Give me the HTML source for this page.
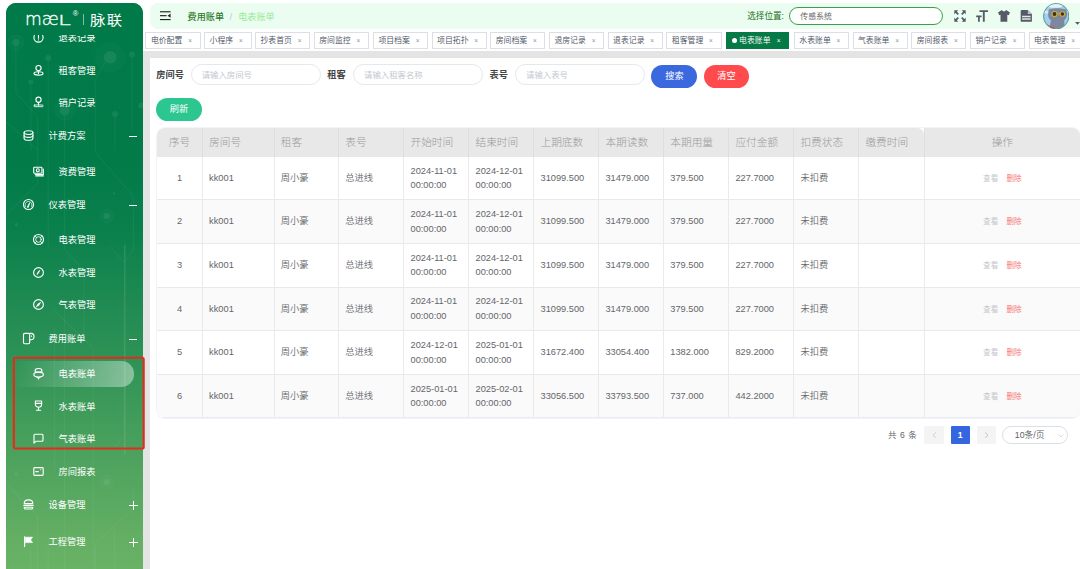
<!DOCTYPE html>
<html lang="zh-CN"><head><meta charset="utf-8"><title>电表账单</title>
<style>
*{box-sizing:border-box;}
html,body{margin:0;padding:0;}
body{width:1080px;height:569px;overflow:hidden;background:#fff;position:relative;
 font-family:"Liberation Sans","Noto Sans CJK SC",sans-serif;color:#606266;}
.abs{position:absolute;}
#side{position:absolute;left:6.3px;top:3px;width:136.9px;height:570px;border-radius:10px 10px 0 0;overflow:hidden;
 background:linear-gradient(180deg,#007a48 0%,#027b49 28%,#0a804c 40%,#1e8a52 52%,#2f9356 63%,#439d5b 74%,#55a760 85%,#62ae63 93%,#6ab366 100%);}
#side svg.bgp{position:absolute;left:0;top:0;}
#logo{position:absolute;left:0;top:0;width:100%;height:32px;background:#007a48;z-index:5;color:#fff;}
.mi{position:absolute;left:0;width:100%;height:20px;color:#fff;font-size:9.25px;line-height:20px;white-space:nowrap;}
.mi .tx{position:absolute;top:0.8px;}
.mi svg{position:absolute;overflow:visible;}
.mi.top .tx{left:42.2px;}
.mi.sub .tx{left:52.1px;}
.pm{position:absolute;left:122.6px;width:9px;height:9px;}
.pm i{position:absolute;background:#fff;display:block;}
#pill{position:absolute;left:7px;top:358.4px;width:120.3px;height:25.2px;border-radius:0 12.6px 12.6px 0;
 background:linear-gradient(90deg,rgba(255,255,255,0) 0%,rgba(255,255,255,.12) 30%,rgba(255,255,255,.42) 100%);}
#redbox{position:absolute;left:11px;top:355px;z-index:9;}
#gray1{position:absolute;left:143.2px;top:51.1px;width:940px;height:6.6px;background:#e4e4e4;}
#gray2{position:absolute;left:143.2px;top:51.1px;width:6.4px;height:520px;background:#e4e4e4;}
#card{position:absolute;left:149.6px;top:57.6px;width:940px;height:520px;background:#fff;border-radius:5px 0 0 0;}
#nav{position:absolute;left:149.6px;top:2.9px;width:940px;height:26.3px;background:#ebfdf0;border-radius:8px 0 0 8px;}
.tab{position:absolute;top:32.3px;height:16.3px;border:0.6px solid #dcdfe7;background:#fff;color:#495060;font-weight:350;font-size:7.875px;line-height:15.1px;white-space:nowrap;padding-left:4.5px;}
.tab .x{position:absolute;right:7.7px;top:0.2px;font-size:6.6px;color:#8f949d;line-height:15.1px;}
.tab.act{background:#067a46;border-color:#067a46;color:#fff;}
.tab.act .x{color:#fff;}
.tab.act .dot{display:inline-block;width:5px;height:5px;border-radius:50%;background:#fff;margin-right:2.6px;position:relative;top:-0.5px;}
.lbl{position:absolute;top:64.5px;height:20.5px;line-height:20.5px;font-size:9.2px;font-weight:bold;color:#444;white-space:nowrap;}
.inp{position:absolute;top:64px;height:21.4px;width:130.2px;border:1px solid #e4e7ed;border-radius:10.7px;background:#fff;
 font-size:8.4px;line-height:20.2px;color:#c4c8d0;padding-left:10px;white-space:nowrap;margin-left:-0.5px;}
.btn{position:absolute;height:23.3px;border-radius:11.7px;color:#fff;font-size:9.2px;line-height:23.3px;text-align:center;white-space:nowrap;}
#tbl{position:absolute;left:157px;top:127.6px;width:923px;height:290.3px;border-radius:8px;overflow:hidden;background:#fff;
 box-shadow:0 0 0 0.7px #edf0f6;}
.th{position:absolute;top:0;height:29.2px;background:#e8e8e8;color:#9a9a9a;font-size:10.7px;font-weight:300;line-height:29.6px;white-space:nowrap;padding-left:6.1px;border-left:0.6px solid #dedede;}
.td{position:absolute;height:43.6px;font-weight:350;font-size:9.25px;color:#64666a;white-space:nowrap;padding-left:6.1px;border-left:0.6px solid #eaeaea;border-bottom:0.6px solid #e9e9e9;line-height:14.6px;}
.td.one{line-height:42.8px;}
.td.two{padding-top:6.9px;}
.td.c{text-align:center;padding-left:0;}
.odd{background:#fff;}
.even{background:#fafafa;}
.op a{font-size:7.6px;}
</style></head>
<body>
<div id="nav"><svg class="abs" style="left:10.9px;top:8.4px" width="10.8" height="9.4" viewBox="0 0 10.8 9.4"><g fill="#222"><rect x="0" y="0.2" width="10.6" height="1.15"/><rect x="0" y="4.1" width="6.6" height="1.15"/><rect x="0" y="8" width="10.6" height="1.15"/><path d="M10.6 2.6 L10.6 6.8 L7.6 4.7Z"/></g></svg><span class="abs" style="left:38px;top:6.9px;font-size:9.1px;line-height:14px;color:#2f7a2c;white-space:nowrap;font-weight:500;">费用账单</span><span class="abs" style="left:80.2px;top:6.9px;font-size:8.5px;line-height:14px;color:#c0c4cc;">/</span><span class="abs" style="left:88.6px;top:6.9px;font-size:9.1px;line-height:14px;color:#98ea98;white-space:nowrap;">电表账单</span><span class="abs" style="left:597.6px;top:6.2px;font-size:8.6px;line-height:14px;color:#1c701c;white-space:nowrap;">选择位置:</span><div class="abs" style="left:639.3px;top:4px;width:154.3px;height:18.4px;border:1px solid #3f9b4e;border-radius:9.2px;background:#fff;font-size:7.9px;line-height:18px;color:#666;padding-left:10.4px;white-space:nowrap;">传感系统</div><svg class="abs" style="left:804.4px;top:7.3px" width="12" height="12" viewBox="0 0 12 12"><g fill="#555b66"><path d="M0.3 0.3H4.3L2.9 1.7L4.9 3.7L3.7 4.9L1.7 2.9L0.3 4.3Z"/><path d="M11.7 0.3V4.3L10.3 2.9L8.3 4.9L7.1 3.7L9.1 1.7L7.7 0.3Z"/><path d="M0.3 11.7V7.7L1.7 9.1L3.7 7.1L4.9 8.3L2.9 10.3L4.3 11.7Z"/><path d="M11.7 11.7H7.7L9.1 10.3L7.1 8.3L8.3 7.1L10.3 9.1L11.7 7.7Z"/></g></svg><svg class="abs" style="left:826.6px;top:7.3px" width="12" height="12" viewBox="0 0 12 12"><g fill="#555b66"><path d="M3.5 0.2H12V2H8.75V11.8H6.85V2H3.5Z"/><path d="M0.2 5.5H5.6V7.2H3.8V11.8H2V7.2H0.2Z"/></g></svg><svg class="abs" style="left:848.9px;top:7.3px" width="12" height="12" viewBox="0 0 12 12"><path fill="#555b66" d="M3.9 0.1C4.4 1 5.1 1.4 6 1.4C6.9 1.4 7.6 1 8.1 0.1L12 2.5L10.7 5.3L9.3 4.7V11.7H2.5V4.7L1.3 5.3L0 2.5Z"/></svg><svg class="abs" style="left:870.9px;top:7.3px" width="12" height="12" viewBox="0 0 12 12"><path fill="#555b66" d="M1.6 0.1H7.7L11.9 4.1V10.9Q11.9 11.8 11 11.8H1.6Q0.7 11.8 0.7 10.9V1Q0.7 0.1 1.6 0.1Z"/><path fill="#c3c8cd" d="M7.9 0.5V3.9H11.5Z"/><path fill="#dfe9e3" d="M2 5.7H10.6V7.3H2ZM2 8.2H10.6V9.7H2Z"/></svg><svg class="abs" style="left:893.2px;top:-0.1px" width="26.4" height="26.4" viewBox="0 0 26.4 26.4"><defs><clipPath id="avc"><circle cx="13.2" cy="13.2" r="12.3"/></clipPath></defs><circle cx="13.2" cy="13.2" r="12.7" fill="#a3cdf2" stroke="#3a9a6a" stroke-width="0.9"/><g clip-path="url(#avc)"><ellipse cx="12" cy="2.6" rx="8" ry="2.2" fill="#e6f1fb"/><ellipse cx="3.5" cy="9" rx="3.2" ry="1.6" fill="#d4e7f8"/><ellipse cx="23" cy="8.4" rx="2.6" ry="1.2" fill="#d4e7f8"/><path d="M5.4 9.2C5.2 6.8 6.6 5.6 8.6 5.9C11.6 5.1 17.6 5.1 20.8 6C22.9 5.7 24.2 7 23.8 9.4C24.6 12.4 23.8 15.6 21.2 17.4C21.6 20 21.4 23.4 21 26.4H7.2C6.8 23.4 7 20.4 8 17.6C5.4 15.8 4.6 12.4 5.4 9.2Z" fill="#7d879d"/><path d="M4 21.5L11.8 25L10.8 26.6L3.6 24Z" fill="#d8414a"/><circle cx="11.5" cy="11" r="3.1" fill="#cfae2c"/><circle cx="19.4" cy="11" r="2.8" fill="#cfae2c"/><rect x="14" y="10.3" width="3" height="1" fill="#cfae2c"/><circle cx="11.5" cy="11" r="1.9" fill="#3e2f22"/><circle cx="19.4" cy="11" r="1.7" fill="#3e2f22"/><path d="M16 13.2L17 13.2L16.5 14.2Z" fill="#5c6478"/></g></svg><svg class="abs" style="left:925.4px;top:19.2px" width="5" height="3" viewBox="0 0 5 3"><path d="M0 0H5L2.5 2.8Z" fill="#555b66"/></svg></div>
<div class="tab" style="left:145.4px;width:55.3px">电价配置<span class="x">×</span></div><div class="tab" style="left:204.1px;width:47.5px">小程序<span class="x">×</span></div><div class="tab" style="left:255.0px;width:55.3px">抄表首页<span class="x">×</span></div><div class="tab" style="left:313.7px;width:55.3px">房间监控<span class="x">×</span></div><div class="tab" style="left:372.9px;width:55.3px">项目档案<span class="x">×</span></div><div class="tab" style="left:431.6px;width:55.3px">项目拓扑<span class="x">×</span></div><div class="tab" style="left:490.2px;width:55.3px">房间档案<span class="x">×</span></div><div class="tab" style="left:548.9px;width:55.3px">退房记录<span class="x">×</span></div><div class="tab" style="left:607.6px;width:55.3px">退表记录<span class="x">×</span></div><div class="tab" style="left:666.3px;width:55.3px">租客管理<span class="x">×</span></div><div class="tab act" style="left:726.0px;width:63.3px"><span class="dot"></span>电表账单<span class="x">×</span></div><div class="tab" style="left:793.8px;width:55.3px">水表账单<span class="x">×</span></div><div class="tab" style="left:852.5px;width:55.3px">气表账单<span class="x">×</span></div><div class="tab" style="left:911.2px;width:55.3px">房间报表<span class="x">×</span></div><div class="tab" style="left:969.9px;width:55.3px">销户记录<span class="x">×</span></div><div class="tab" style="left:1028.5px;width:55.3px">电表管理<span class="x">×</span></div>
<div id="gray1"></div><div id="gray2"></div><div id="card"></div>
<div class="lbl" style="left:156.3px">房间号</div><div class="inp" style="left:191.2px">请输入房间号</div><div class="lbl" style="left:327.3px">租客</div><div class="inp" style="left:353.6px">请输入租客名称</div><div class="lbl" style="left:489.5px">表号</div><div class="inp" style="left:515.6px">请输入表号</div><div class="btn" style="left:651.3px;top:64.8px;width:46.2px;background:#3a68de">搜索</div><div class="btn" style="left:703.6px;top:64.8px;width:45.9px;background:#ff4a4e">清空</div><div class="btn" style="left:156.2px;top:97.5px;width:45.6px;background:#2cc691">刷新</div>
<div id="tbl"><div class="th" style="left:0.0px;width:45.0px;text-align:center;padding-left:0;border-left:none;">序号</div><div class="th" style="left:45.0px;width:71.5px;">房间号</div><div class="th" style="left:116.6px;width:64.6px;">租客</div><div class="th" style="left:181.2px;width:65.2px;">表号</div><div class="th" style="left:246.4px;width:65.0px;">开始时间</div><div class="th" style="left:311.4px;width:65.0px;">结束时间</div><div class="th" style="left:376.4px;width:64.9px;">上期底数</div><div class="th" style="left:441.3px;width:64.9px;">本期读数</div><div class="th" style="left:506.2px;width:65.1px;">本期用量</div><div class="th" style="left:571.3px;width:65.0px;">应付金额</div><div class="th" style="left:636.3px;width:65.0px;">扣费状态</div><div class="th" style="left:701.3px;width:65.4px;border-radius:0 6.5px 0 0;">缴费时间</div><div class="th" style="left:766.7px;width:156.3px;text-align:center;padding-left:0;">操作</div><div class="td one c odd" style="left:0.0px;top:29.20px;width:45.0px;border-left:none;">1</div><div class="td one  odd" style="left:45.0px;top:29.20px;width:71.5px;">kk001</div><div class="td one  odd" style="left:116.6px;top:29.20px;width:64.6px;">周小豪</div><div class="td one  odd" style="left:181.2px;top:29.20px;width:65.2px;">总进线</div><div class="td two odd" style="left:246.4px;top:29.20px;width:65.0px;">2024-11-01<br>00:00:00</div><div class="td two odd" style="left:311.4px;top:29.20px;width:65.0px;">2024-12-01<br>00:00:00</div><div class="td one  odd" style="left:376.4px;top:29.20px;width:64.9px;">31099.500</div><div class="td one  odd" style="left:441.3px;top:29.20px;width:64.9px;">31479.000</div><div class="td one  odd" style="left:506.2px;top:29.20px;width:65.1px;">379.500</div><div class="td one  odd" style="left:571.3px;top:29.20px;width:65.0px;">227.7000</div><div class="td one  odd" style="left:636.3px;top:29.20px;width:65.0px;">未扣费</div><div class="td one  odd" style="left:701.3px;top:29.20px;width:65.4px;"></div><div class="td one c op odd" style="left:766.7px;top:29.20px;width:156.3px;"><a style="color:#c3c6cc;margin-right:8.2px">查看</a><a style="color:#f56c6c">删除</a></div><div class="td one c even" style="left:0.0px;top:72.80px;width:45.0px;border-left:none;">2</div><div class="td one  even" style="left:45.0px;top:72.80px;width:71.5px;">kk001</div><div class="td one  even" style="left:116.6px;top:72.80px;width:64.6px;">周小豪</div><div class="td one  even" style="left:181.2px;top:72.80px;width:65.2px;">总进线</div><div class="td two even" style="left:246.4px;top:72.80px;width:65.0px;">2024-11-01<br>00:00:00</div><div class="td two even" style="left:311.4px;top:72.80px;width:65.0px;">2024-12-01<br>00:00:00</div><div class="td one  even" style="left:376.4px;top:72.80px;width:64.9px;">31099.500</div><div class="td one  even" style="left:441.3px;top:72.80px;width:64.9px;">31479.000</div><div class="td one  even" style="left:506.2px;top:72.80px;width:65.1px;">379.500</div><div class="td one  even" style="left:571.3px;top:72.80px;width:65.0px;">227.7000</div><div class="td one  even" style="left:636.3px;top:72.80px;width:65.0px;">未扣费</div><div class="td one  even" style="left:701.3px;top:72.80px;width:65.4px;"></div><div class="td one c op even" style="left:766.7px;top:72.80px;width:156.3px;"><a style="color:#c3c6cc;margin-right:8.2px">查看</a><a style="color:#f56c6c">删除</a></div><div class="td one c odd" style="left:0.0px;top:116.40px;width:45.0px;border-left:none;">3</div><div class="td one  odd" style="left:45.0px;top:116.40px;width:71.5px;">kk001</div><div class="td one  odd" style="left:116.6px;top:116.40px;width:64.6px;">周小豪</div><div class="td one  odd" style="left:181.2px;top:116.40px;width:65.2px;">总进线</div><div class="td two odd" style="left:246.4px;top:116.40px;width:65.0px;">2024-11-01<br>00:00:00</div><div class="td two odd" style="left:311.4px;top:116.40px;width:65.0px;">2024-12-01<br>00:00:00</div><div class="td one  odd" style="left:376.4px;top:116.40px;width:64.9px;">31099.500</div><div class="td one  odd" style="left:441.3px;top:116.40px;width:64.9px;">31479.000</div><div class="td one  odd" style="left:506.2px;top:116.40px;width:65.1px;">379.500</div><div class="td one  odd" style="left:571.3px;top:116.40px;width:65.0px;">227.7000</div><div class="td one  odd" style="left:636.3px;top:116.40px;width:65.0px;">未扣费</div><div class="td one  odd" style="left:701.3px;top:116.40px;width:65.4px;"></div><div class="td one c op odd" style="left:766.7px;top:116.40px;width:156.3px;"><a style="color:#c3c6cc;margin-right:8.2px">查看</a><a style="color:#f56c6c">删除</a></div><div class="td one c even" style="left:0.0px;top:160.00px;width:45.0px;border-left:none;">4</div><div class="td one  even" style="left:45.0px;top:160.00px;width:71.5px;">kk001</div><div class="td one  even" style="left:116.6px;top:160.00px;width:64.6px;">周小豪</div><div class="td one  even" style="left:181.2px;top:160.00px;width:65.2px;">总进线</div><div class="td two even" style="left:246.4px;top:160.00px;width:65.0px;">2024-11-01<br>00:00:00</div><div class="td two even" style="left:311.4px;top:160.00px;width:65.0px;">2024-12-01<br>00:00:00</div><div class="td one  even" style="left:376.4px;top:160.00px;width:64.9px;">31099.500</div><div class="td one  even" style="left:441.3px;top:160.00px;width:64.9px;">31479.000</div><div class="td one  even" style="left:506.2px;top:160.00px;width:65.1px;">379.500</div><div class="td one  even" style="left:571.3px;top:160.00px;width:65.0px;">227.7000</div><div class="td one  even" style="left:636.3px;top:160.00px;width:65.0px;">未扣费</div><div class="td one  even" style="left:701.3px;top:160.00px;width:65.4px;"></div><div class="td one c op even" style="left:766.7px;top:160.00px;width:156.3px;"><a style="color:#c3c6cc;margin-right:8.2px">查看</a><a style="color:#f56c6c">删除</a></div><div class="td one c odd" style="left:0.0px;top:203.60px;width:45.0px;border-left:none;">5</div><div class="td one  odd" style="left:45.0px;top:203.60px;width:71.5px;">kk001</div><div class="td one  odd" style="left:116.6px;top:203.60px;width:64.6px;">周小豪</div><div class="td one  odd" style="left:181.2px;top:203.60px;width:65.2px;">总进线</div><div class="td two odd" style="left:246.4px;top:203.60px;width:65.0px;">2024-12-01<br>00:00:00</div><div class="td two odd" style="left:311.4px;top:203.60px;width:65.0px;">2025-01-01<br>00:00:00</div><div class="td one  odd" style="left:376.4px;top:203.60px;width:64.9px;">31672.400</div><div class="td one  odd" style="left:441.3px;top:203.60px;width:64.9px;">33054.400</div><div class="td one  odd" style="left:506.2px;top:203.60px;width:65.1px;">1382.000</div><div class="td one  odd" style="left:571.3px;top:203.60px;width:65.0px;">829.2000</div><div class="td one  odd" style="left:636.3px;top:203.60px;width:65.0px;">未扣费</div><div class="td one  odd" style="left:701.3px;top:203.60px;width:65.4px;"></div><div class="td one c op odd" style="left:766.7px;top:203.60px;width:156.3px;"><a style="color:#c3c6cc;margin-right:8.2px">查看</a><a style="color:#f56c6c">删除</a></div><div class="td one c even" style="left:0.0px;top:247.20px;width:45.0px;border-bottom-color:#e8ebf2;border-left:none;">6</div><div class="td one  even" style="left:45.0px;top:247.20px;width:71.5px;border-bottom-color:#e8ebf2;">kk001</div><div class="td one  even" style="left:116.6px;top:247.20px;width:64.6px;border-bottom-color:#e8ebf2;">周小豪</div><div class="td one  even" style="left:181.2px;top:247.20px;width:65.2px;border-bottom-color:#e8ebf2;">总进线</div><div class="td two even" style="left:246.4px;top:247.20px;width:65.0px;border-bottom-color:#e8ebf2;">2025-01-01<br>00:00:00</div><div class="td two even" style="left:311.4px;top:247.20px;width:65.0px;border-bottom-color:#e8ebf2;">2025-02-01<br>00:00:00</div><div class="td one  even" style="left:376.4px;top:247.20px;width:64.9px;border-bottom-color:#e8ebf2;">33056.500</div><div class="td one  even" style="left:441.3px;top:247.20px;width:64.9px;border-bottom-color:#e8ebf2;">33793.500</div><div class="td one  even" style="left:506.2px;top:247.20px;width:65.1px;border-bottom-color:#e8ebf2;">737.000</div><div class="td one  even" style="left:571.3px;top:247.20px;width:65.0px;border-bottom-color:#e8ebf2;">442.2000</div><div class="td one  even" style="left:636.3px;top:247.20px;width:65.0px;border-bottom-color:#e8ebf2;">未扣费</div><div class="td one  even" style="left:701.3px;top:247.20px;width:65.4px;border-bottom-color:#e8ebf2;"></div><div class="td one c op even" style="left:766.7px;top:247.20px;width:156.3px;border-bottom-color:#e8ebf2;"><a style="color:#c3c6cc;margin-right:8.2px">查看</a><a style="color:#f56c6c">删除</a></div></div>
<div class="abs" style="left:888px;top:426px;height:18px;line-height:18px;font-size:8.5px;font-weight:350;word-spacing:1.2px;color:#606266;white-space:nowrap;">共 6 条</div><div class="abs" style="left:924.4px;top:426px;width:19.5px;height:18px;background:#f4f4f5;border-radius:1px;"><svg class="abs" style="left:7.3px;top:5.8px" width="5" height="6.4" viewBox="0 0 5 6.4"><path d="M3.9 0.4L1 3.2L3.9 6" stroke="#c0c4cc" stroke-width="0.8" fill="none"/></svg></div><div class="abs" style="left:950.5px;top:426px;width:19.5px;height:18px;background:#3566e0;border-radius:1px;color:#fff;font-size:8.6px;font-weight:bold;line-height:18px;text-align:center;">1</div><div class="abs" style="left:976.5px;top:426px;width:19.5px;height:18px;background:#f4f4f5;border-radius:1px;"><svg class="abs" style="left:7.3px;top:5.8px" width="5" height="6.4" viewBox="0 0 5 6.4"><path d="M1.1 0.4L4 3.2L1.1 6" stroke="#b4b8c0" stroke-width="0.8" fill="none"/></svg></div><div class="abs" style="left:1002.2px;top:426px;width:66.2px;height:18px;border:0.7px solid #dcdfe6;border-radius:9px;font-size:8.8px;font-weight:350;line-height:16.8px;color:#606266;padding-left:11.6px;white-space:nowrap;">10条/页<svg class="abs" style="left:55px;top:6.6px" width="5.6" height="3.6" viewBox="0 0 5.6 3.6"><path d="M0.4 0.5L2.8 2.9L5.2 0.5" stroke="#c0c4cc" stroke-width="0.7" fill="none"/></svg></div>
<div id="side"><svg class="bgp" width="137" height="567" viewBox="0 0 137 567"><g transform="translate(-6.3,-3)"><g fill="none" stroke="#fff" stroke-opacity="0.075" stroke-width="0.8"><path d="M16.2 45V93L38 116.7V183L6.3 215"/><path d="M48.5 60V250"/><path d="M31.2 84V150"/><path d="M105.5 62L95.5 80.5V152L133.6 196.6V250L124.8 262.3"/><path d="M132.2 57V130"/><path d="M65 115V249L84.4 271.4V335"/><path d="M115.3 117V150"/><path d="M6.3 122L38 150"/><path d="M109.7 246L124.8 262.3"/><path d="M125 244.7V453.8" stroke-width="1.6" stroke-opacity="0.1"/><path d="M125.6 435.5L115.3 446.7"/><path d="M53.4 309.7L93.5 347.7V569"/><path d="M7 483.3L19.7 496"/><path d="M9.8 489L38 515V569"/><path d="M65 300V569"/><path d="M133.6 489V508.7L95.6 543V569"/><path d="M31 550V569"/><path d="M48.5 540V569"/><path d="M115 530V569"/><path d="M55 330V470"/></g><g fill="#fff" fill-opacity="0.075"><circle cx="16.2" cy="42.5" r="3.5"/><circle cx="48.5" cy="58" r="3"/><circle cx="31.2" cy="81.9" r="2.5"/><circle cx="110.4" cy="57.3" r="6.3"/><circle cx="132.2" cy="54.5" r="3"/><circle cx="65" cy="110.4" r="5"/><circle cx="115.3" cy="114" r="3"/><circle cx="141.4" cy="105.5" r="3"/><circle cx="107" cy="216" r="3"/><circle cx="16.6" cy="224.7" r="1.6"/><circle cx="114.6" cy="193.5" r="1.3"/><circle cx="107" cy="481.9" r="3"/><circle cx="16.6" cy="473.9" r="1.6"/></g><g fill="#fff" fill-opacity="0.02" stroke="#fff" stroke-opacity="0.035" stroke-width="0.6"><circle cx="110.4" cy="57.3" r="14.8"/><circle cx="65" cy="110.4" r="10"/><circle cx="107" cy="216" r="7"/><circle cx="107" cy="481.9" r="7"/><circle cx="16.2" cy="42.5" r="8"/></g></g></svg><div id="pill"></div><div class="mi sub" style="top:24.3px"><svg style="left:26.5px;top:4.5px" width="11" height="11" viewBox="0 0 11 11" fill="none" stroke="#fff" stroke-width="1.12" stroke-linecap="round" stroke-linejoin="round"><circle cx="5.5" cy="5.5" r="4.6"/><path d="M5.5 2.8V6.2M5.5 7.8V8"/></svg><span class="tx">退表记录</span></div><div class="mi sub" style="top:57.0px"><svg style="left:26.5px;top:4.5px" width="11" height="11" viewBox="0 0 11 11" fill="none" stroke="#fff" stroke-width="1.12" stroke-linecap="round" stroke-linejoin="round"><circle cx="5.5" cy="3.1" r="2.6"/><path d="M5.5 5.7V8.5"/><ellipse cx="5.5" cy="8.4" rx="4.5" ry="1.7"/></svg><span class="tx">租客管理</span></div><div class="mi sub" style="top:88.9px"><svg style="left:26.5px;top:4.5px" width="11" height="11" viewBox="0 0 11 11" fill="none" stroke="#fff" stroke-width="1.12" stroke-linecap="round" stroke-linejoin="round"><circle cx="5.5" cy="3.7" r="2.6"/><path d="M5.5 6.3V9"/><rect x="0.9" y="9" width="9.2" height="1.7" rx="0.8" stroke-width="0.85"/></svg><span class="tx">销户记录</span></div><div class="mi top" style="top:122.4px"><svg style="left:16.7px;top:4.5px" width="11" height="11" viewBox="0 0 11 11" fill="none" stroke="#fff" stroke-width="1.12" stroke-linecap="round" stroke-linejoin="round"><ellipse cx="5.5" cy="2.6" rx="4.4" ry="1.9"/><path d="M1.1 2.6V8.4C1.1 9.5 3 10.3 5.5 10.3C8 10.3 9.9 9.5 9.9 8.4V2.6"/><path d="M1.1 5.5C1.1 6.6 3 7.4 5.5 7.4C8 7.4 9.9 6.6 9.9 5.5"/></svg><span class="tx">计费方案</span><span class="pm" style="top:6.9px"><i style="left:0.5px;top:4px;width:8px;height:1px"></i></span></div><div class="mi sub" style="top:158.1px"><svg style="left:26.5px;top:4.5px" width="11" height="11" viewBox="0 0 11 11" fill="none" stroke="#fff" stroke-width="1.12" stroke-linecap="round" stroke-linejoin="round"><rect x="0.7" y="1.2" width="8.2" height="6" rx="0.6"/><circle cx="4.8" cy="4.2" r="1.5"/><path d="M2.2 8.6H10.3V3"/><path d="M2.8 9.9H10.3"/></svg><span class="tx">资费管理</span></div><div class="mi top" style="top:191.3px"><svg style="left:16.7px;top:4.5px" width="11" height="11" viewBox="0 0 11 11" fill="none" stroke="#fff" stroke-width="1.12" stroke-linecap="round" stroke-linejoin="round"><circle cx="5.5" cy="5.5" r="5"/><path d="M2.5 7.6C1.5 5 3 2.5 5.5 2.5C8 2.5 9.5 5 8.5 7.6" stroke-width="0.7" stroke-dasharray="0.8 0.7"/><path d="M4.6 8.3L5.2 8.5L6.6 4Z" fill="#fff" stroke-width="0.8"/></svg><span class="tx">仪表管理</span><span class="pm" style="top:6.9px"><i style="left:0.5px;top:4px;width:8px;height:1px"></i></span></div><div class="mi sub" style="top:226.4px"><svg style="left:26.5px;top:4.5px" width="11" height="11" viewBox="0 0 11 11" fill="none" stroke="#fff" stroke-width="1.12" stroke-linecap="round" stroke-linejoin="round"><circle cx="5.5" cy="5.5" r="5"/><circle cx="5.5" cy="5.5" r="2.8" stroke-width="0.85"/><path d="M2 2L3.5 3.5M9 2L7.5 3.5M2 9L3.5 7.5M9 9L7.5 7.5" stroke-width="0.75"/></svg><span class="tx">电表管理</span></div><div class="mi sub" style="top:259.6px"><svg style="left:26.5px;top:4.5px" width="11" height="11" viewBox="0 0 11 11" fill="none" stroke="#fff" stroke-width="1.12" stroke-linecap="round" stroke-linejoin="round"><circle cx="5.5" cy="5.5" r="4.9"/><path d="M4.1 7.4C3.7 6.6 5.2 4.2 6.8 3.1C6.7 5 5 7.5 4.1 7.4Z" fill="#fff" stroke-width="0.4"/></svg><span class="tx">水表管理</span></div><div class="mi sub" style="top:291.4px"><svg style="left:26.5px;top:4.5px" width="11" height="11" viewBox="0 0 11 11" fill="none" stroke="#fff" stroke-width="1.12" stroke-linecap="round" stroke-linejoin="round"><circle cx="5.5" cy="5.5" r="4.9"/><path d="M3.1 7.9L4.9 4.8L7.9 3.1L6.2 6.2Z" fill="#fff" stroke-width="0.4"/></svg><span class="tx">气表管理</span></div><div class="mi top" style="top:325.1px"><svg style="left:16.7px;top:4.5px" width="11" height="11" viewBox="0 0 11 11" fill="none" stroke="#fff" stroke-width="1.12" stroke-linecap="round" stroke-linejoin="round"><rect x="0.5" y="0.4" width="6.2" height="10.3" rx="1.2"/><path d="M6.7 0.4H8.2C10 0.4 11 1.8 11 3.6C11 5.4 10 6.8 8.2 6.8H6.7"/><path d="M8.6 2.8V3.6" stroke-width="0.9"/></svg><span class="tx">费用账单</span><span class="pm" style="top:6.9px"><i style="left:0.5px;top:4px;width:8px;height:1px"></i></span></div><div class="mi sub" style="top:360.3px"><svg style="left:26.5px;top:4.5px" width="11" height="11" viewBox="0 0 11 11" fill="none" stroke="#fff" stroke-width="1.12" stroke-linecap="round" stroke-linejoin="round"><path d="M2.2 3.6V2.2C2.2 1.2 3.6 0.5 5.5 0.5C7.4 0.5 8.8 1.2 8.8 2.2V3.6"/><path d="M2.2 2.4C2.2 3.3 3.6 3.9 5.5 3.9C7.4 3.9 8.8 3.3 8.8 2.4" stroke-width="0.7"/><ellipse cx="5.6" cy="6.6" rx="4.8" ry="2.5"/><path d="M3.9 9.1C4.3 9.7 4.8 9.9 5.5 9.9C6.2 9.9 6.7 9.7 7.1 9.1M5.5 9.9V10.9"/></svg><span class="tx">电表账单</span></div><div class="mi sub" style="top:392.8px"><svg style="left:26.5px;top:4.5px" width="11" height="11" viewBox="0 0 11 11" fill="none" stroke="#fff" stroke-width="1.12" stroke-linecap="round" stroke-linejoin="round"><path d="M2.4 1H8.6V4.2C8.6 6 7.2 7.2 5.5 7.2C3.8 7.2 2.4 6 2.4 4.2Z"/><path d="M2.4 3.4H8.6"/><path d="M5.5 7.2V10.2M3.4 10.2H7.6"/></svg><span class="tx">水表账单</span></div><div class="mi sub" style="top:425.4px"><svg style="left:26.5px;top:4.5px" width="11" height="11" viewBox="0 0 11 11" fill="none" stroke="#fff" stroke-width="1.12" stroke-linecap="round" stroke-linejoin="round"><path d="M2 1.2H9Q10 1.2 10 2.2V7.2Q10 8.2 9 8.2H3.2L1 10.2V2.2Q1 1.2 2 1.2Z"/></svg><span class="tx">气表账单</span></div><div class="mi sub" style="top:458.7px"><svg style="left:26.5px;top:4.5px" width="11" height="11" viewBox="0 0 11 11" fill="none" stroke="#fff" stroke-width="1.12" stroke-linecap="round" stroke-linejoin="round"><rect x="0.8" y="1.6" width="9.4" height="7.8" rx="0.9"/><path d="M2.8 5.6H5.2" stroke-width="1.3"/><path d="M7.6 3.7H7.8" stroke-width="1.1"/></svg><span class="tx">房间报表</span></div><div class="mi top" style="top:491.4px"><svg style="left:16.7px;top:4.5px" width="11" height="11" viewBox="0 0 11 11" fill="none" stroke="#fff" stroke-width="1.12" stroke-linecap="round" stroke-linejoin="round"><path d="M1.2 4.6C1.2 2.4 3 0.9 5.5 0.9C8 0.9 9.8 2.4 9.8 4.6Z"/><path d="M0.8 6.4H10.2"/><path d="M1.2 8.2H9.8V8.6C9.8 9.4 9.2 10 8.4 10H2.6C1.8 10 1.2 9.4 1.2 8.6Z"/></svg><span class="tx">设备管理</span><span class="pm" style="top:6.9px"><i style="left:0;top:3.95px;width:9px;height:1.1px"></i><i style="left:3.95px;top:0;width:1.1px;height:9px"></i></span></div><div class="mi top" style="top:528.1px"><svg style="left:16.7px;top:4.5px" width="11" height="11" viewBox="0 0 11 11" fill="none" stroke="#fff" stroke-width="1.12" stroke-linecap="round" stroke-linejoin="round"><path d="M1.6 0.8V10.4" stroke-width="1.2"/><path d="M2.2 1.2H9.6L7.6 3.9L9.6 6.6H2.2Z" fill="#fff" stroke-width="0.6"/></svg><span class="tx">工程管理</span><span class="pm" style="top:6.9px"><i style="left:0;top:3.95px;width:9px;height:1.1px"></i><i style="left:3.95px;top:0;width:1.1px;height:9px"></i></span></div><div id="logo"><span class="abs" style="left:18.6px;top:3.5px;font-size:18.5px;line-height:24px;font-weight:200;white-space:nowrap;font-family:'DejaVu Sans Light','DejaVu Sans','Liberation Sans',sans-serif;-webkit-text-stroke:0.35px #fff;"><span style="display:inline-block;transform:scaleX(0.93);transform-origin:0 0;">mæ</span><span style="display:inline-block;font-size:15.5px;line-height:24px;margin-left:-2.9px;transform:scale(1.5,0.9);transform-origin:0 17.36px;">L</span></span><span class="abs" style="left:64.7px;top:6px;width:9px;font-size:7.6px;line-height:9px;text-align:center;">®</span><span class="abs" style="left:76.5px;top:11px;width:0.7px;height:11.2px;background:rgba(255,255,255,.5)"></span><span class="abs" style="left:83.8px;top:7px;font-size:15.4px;line-height:20px;white-space:nowrap;font-weight:400;letter-spacing:1.2px;transform:scaleY(0.9);transform-origin:0 50%;">脉联</span></div></div>
<svg id="redbox" width="136" height="96" viewBox="0 0 136 96"><rect x="2.85" y="2.75" width="129.85" height="90.8" rx="1.6" fill="none" stroke="#e9291b" stroke-width="2.1"/></svg>
</body></html>
